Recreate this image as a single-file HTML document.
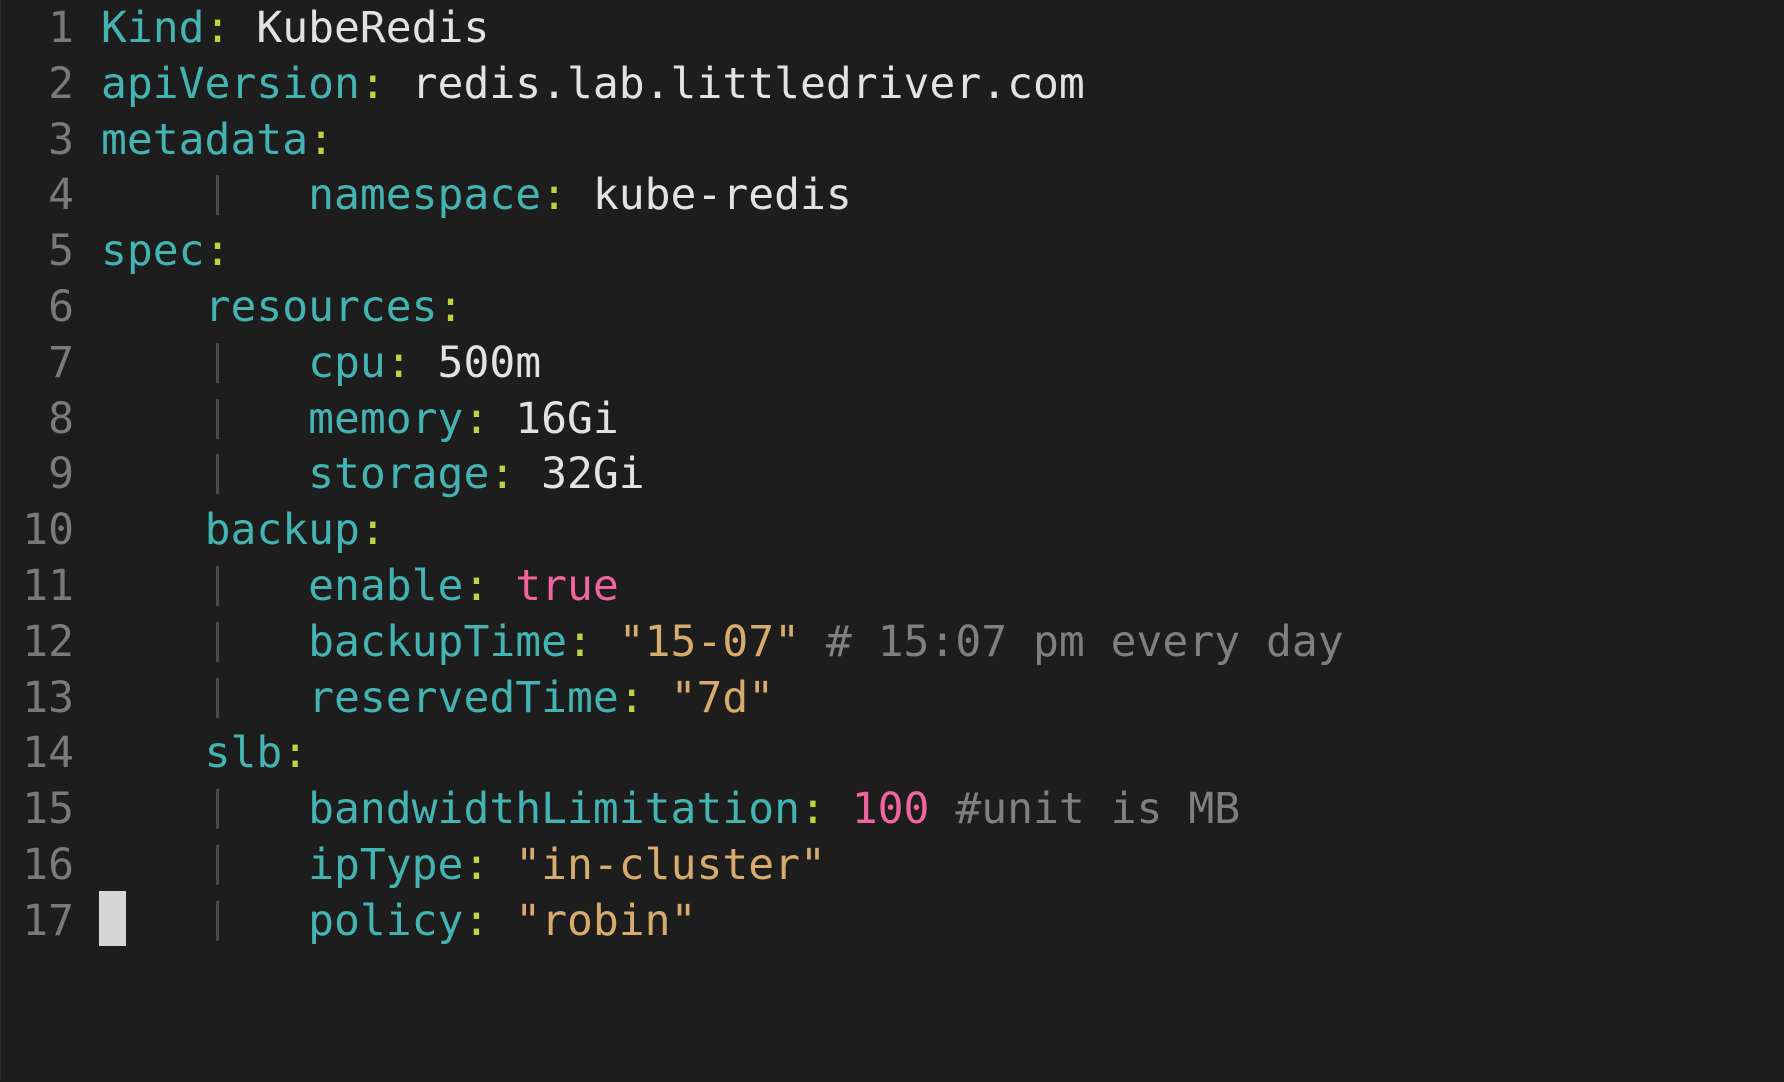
<!DOCTYPE html>
<html><head><meta charset="utf-8"><style>
html,body{margin:0;padding:0;}
body{width:1784px;height:1080px;background:#1d1d1d;overflow:hidden;position:relative;border-left:1px solid #2c2c2c;box-sizing:border-box;}
.wrap{position:absolute;left:0;top:2px;width:1784px;height:1080px;}
.ln{position:absolute;left:0;width:73px;text-align:right;color:#7a7a7a;}
.tx{position:absolute;left:100px;white-space:pre;color:#e2e2e2;}
.row{position:absolute;left:0;height:56px;line-height:56px;font-family:"DejaVu Sans Mono","Liberation Mono",monospace;font-size:43px;width:1784px;}
.k{color:#44b4b3}.c{color:#c3d23a}.s{color:#d7ab6c}.p{color:#f0649f}.m{color:#7f7f7f}
.g{position:absolute;left:215px;width:3px;background:#4a4a4a;height:40px;}
.cur{position:absolute;left:98px;top:889px;width:27px;height:55px;background:#d6d6d6;}
</style></head><body><div class="wrap">
<div class="row" style="top:-2px"><span class="ln">1</span><span class="tx"><span class="k">Kind</span><span class="c">:</span> KubeRedis</span></div>
<div class="row" style="top:54px"><span class="ln">2</span><span class="tx"><span class="k">apiVersion</span><span class="c">:</span> redis.lab.littledriver.com</span></div>
<div class="row" style="top:110px"><span class="ln">3</span><span class="tx"><span class="k">metadata</span><span class="c">:</span></span></div>
<div class="row" style="top:165px"><span class="ln">4</span><span class="g" style="top:8px"></span><span class="tx">        <span class="k">namespace</span><span class="c">:</span> kube-redis</span></div>
<div class="row" style="top:221px"><span class="ln">5</span><span class="tx"><span class="k">spec</span><span class="c">:</span></span></div>
<div class="row" style="top:277px"><span class="ln">6</span><span class="tx">    <span class="k">resources</span><span class="c">:</span></span></div>
<div class="row" style="top:333px"><span class="ln">7</span><span class="g" style="top:8px"></span><span class="tx">        <span class="k">cpu</span><span class="c">:</span> 500m</span></div>
<div class="row" style="top:389px"><span class="ln">8</span><span class="g" style="top:8px"></span><span class="tx">        <span class="k">memory</span><span class="c">:</span> 16Gi</span></div>
<div class="row" style="top:444px"><span class="ln">9</span><span class="g" style="top:8px"></span><span class="tx">        <span class="k">storage</span><span class="c">:</span> 32Gi</span></div>
<div class="row" style="top:500px"><span class="ln">10</span><span class="tx">    <span class="k">backup</span><span class="c">:</span></span></div>
<div class="row" style="top:556px"><span class="ln">11</span><span class="g" style="top:8px"></span><span class="tx">        <span class="k">enable</span><span class="c">:</span> <span class="p">true</span></span></div>
<div class="row" style="top:612px"><span class="ln">12</span><span class="g" style="top:8px"></span><span class="tx">        <span class="k">backupTime</span><span class="c">:</span> <span class="s">"15-07"</span> <span class="m"># 15:07 pm every day</span></span></div>
<div class="row" style="top:668px"><span class="ln">13</span><span class="g" style="top:8px"></span><span class="tx">        <span class="k">reservedTime</span><span class="c">:</span> <span class="s">"7d"</span></span></div>
<div class="row" style="top:723px"><span class="ln">14</span><span class="tx">    <span class="k">slb</span><span class="c">:</span></span></div>
<div class="row" style="top:779px"><span class="ln">15</span><span class="g" style="top:8px"></span><span class="tx">        <span class="k">bandwidthLimitation</span><span class="c">:</span> <span class="p">100</span> <span class="m">#unit is MB</span></span></div>
<div class="row" style="top:835px"><span class="ln">16</span><span class="g" style="top:8px"></span><span class="tx">        <span class="k">ipType</span><span class="c">:</span> <span class="s">"in-cluster"</span></span></div>
<div class="row" style="top:891px"><span class="ln">17</span><span class="g" style="top:8px"></span><span class="tx">        <span class="k">policy</span><span class="c">:</span> <span class="s">"robin"</span></span></div>
<div class="cur"></div>
</div></body></html>
